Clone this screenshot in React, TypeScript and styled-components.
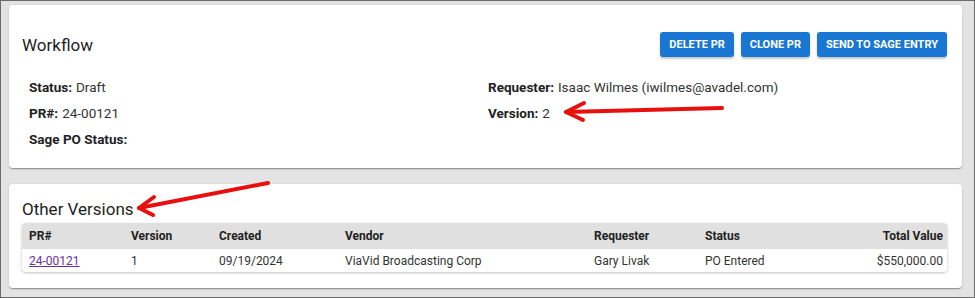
import * as React from 'react';
import styled, { createGlobalStyle } from 'styled-components';

const GlobalStyle = createGlobalStyle`
    html, body {
        margin: 0;
        padding: 0;
        background: #ffffff;
    }
    * {
        box-sizing: border-box;
    }
`;

const Frame = styled.div`
    position: relative;
    width: 975px;
    height: 298px;
    border: 1px solid #6b6b6b;
    background-color: #e3e3e3;
    padding: 4px 12px 0 8px;
    display: flex;
    flex-direction: column;
    gap: 16px;
    font-family: Roboto, 'Liberation Sans', Arial, sans-serif;
    color: #222;
    overflow: hidden;
`;

const Card = styled.div<{ $height: number }>`
    height: ${props => props.$height}px;
    background-color: #ffffff;
    border-radius: 4px;
    box-shadow: 0 2px 1px -1px rgba(0, 0, 0, 0.2), 0 1px 1px 0 rgba(0, 0, 0, 0.14),
        0 1px 3px 0 rgba(0, 0, 0, 0.12);
    padding: 0 15px 0 13px;
    display: flex;
    flex-direction: column;
`;

const Header = styled.div`
    display: flex;
    align-items: center;
    justify-content: space-between;
    height: 25px;
    margin-top: 27px;
`;

const Title = styled.h2`
    margin: 0;
    font-size: 17px;
    font-weight: 400;
    color: #1e1e1e;
    line-height: 20px;
`;

const Actions = styled.div`
    display: flex;
    gap: 7px;
`;

const Button = styled.button`
    height: 25px;
    padding: 0 9px;
    border: none;
    border-radius: 3px;
    background-color: #1976d2;
    color: #ffffff;
    font-family: Roboto, 'Liberation Sans', Arial, sans-serif;
    font-size: 11px;
    font-weight: 700;
    letter-spacing: 0;
    text-transform: uppercase;
    box-shadow: 0 2px 2px rgba(0, 0, 0, 0.22);
`;

const Fields = styled.div`
    display: grid;
    grid-template-columns: 459px 1fr;
    grid-auto-rows: 26px;
    padding: 17px 0 0 7px;
`;

const Field = styled.div`
    display: flex;
    align-items: center;
    font-size: 13.5px;
    color: #333;
`;

const Label = styled.span`
    font-weight: 700;
    color: #222;
    margin-right: 4px;
`;

const OtherTitle = styled(Title)`
    margin-top: 15px;
    margin-bottom: 4px;
`;

const Table = styled.table`
    width: 100%;
    border-collapse: collapse;
    border-radius: 4px;
    overflow: hidden;
    box-shadow: 0 1px 3px rgba(0, 0, 0, 0.25);
    font-size: 12px;
`;

const Th = styled.th<{ $align?: string }>`
    background-color: #e0e0e0;
    height: 26px;
    padding: 0 4px 0 7px;
    text-align: ${props => props.$align || 'left'};
    font-weight: 700;
    color: #222;
`;

const Td = styled.td<{ $align?: string }>`
    height: 23px;
    padding: 0 4px 0 7px;
    text-align: ${props => props.$align || 'left'};
    color: #333;
`;

const PrLink = styled.a`
    color: #6b2f9e;
    text-decoration: underline;
`;

const Overlay = styled.svg`
    position: absolute;
    left: -1px;
    top: -1px;
    pointer-events: none;
`;

const columns = [
    { title: 'PR#', width: 102 },
    { title: 'Version', width: 88 },
    { title: 'Created', width: 126 },
    { title: 'Vendor', width: 249 },
    { title: 'Requester', width: 111 },
    { title: 'Status', width: 120 },
    { title: 'Total Value', width: undefined, align: 'right' },
];

function Arrow({ tail, tip, up, down }: { tail: number[]; tip: number[]; up: number[]; down: number[] }) {
    return (
        <g stroke="#e8100e" strokeWidth={4} strokeLinecap="round" strokeLinejoin="round" fill="none">
            <line x1={tail[0]} y1={tail[1]} x2={tip[0]} y2={tip[1]} />
            <polyline points={`${up[0]},${up[1]} ${tip[0]},${tip[1]} ${down[0]},${down[1]}`} />
        </g>
    );
}

export default function App() {
    return (
        <>
            <GlobalStyle />
            <Frame>
                <Card $height={163}>
                    <Header>
                        <Title>Workflow</Title>
                        <Actions>
                            <Button>Delete PR</Button>
                            <Button>Clone PR</Button>
                            <Button>Send to Sage Entry</Button>
                        </Actions>
                    </Header>
                    <Fields>
                        <Field>
                            <Label>Status:</Label>Draft
                        </Field>
                        <Field>
                            <Label>Requester:</Label>Isaac Wilmes (iwilmes@avadel.com)
                        </Field>
                        <Field>
                            <Label>PR#:</Label>24-00121
                        </Field>
                        <Field>
                            <Label>Version:</Label>2
                        </Field>
                        <Field>
                            <Label>Sage PO Status:</Label>
                        </Field>
                    </Fields>
                </Card>

                <Card $height={104}>
                    <OtherTitle>Other Versions</OtherTitle>
                    <Table>
                        <colgroup>
                            {columns.map(c => (
                                <col key={c.title} style={c.width ? { width: c.width } : undefined} />
                            ))}
                        </colgroup>
                        <thead>
                            <tr>
                                {columns.map(c => (
                                    <Th key={c.title} $align={c.align}>
                                        {c.title}
                                    </Th>
                                ))}
                            </tr>
                        </thead>
                        <tbody>
                            <tr>
                                <Td>
                                    <PrLink href="#">24-00121</PrLink>
                                </Td>
                                <Td>1</Td>
                                <Td>09/19/2024</Td>
                                <Td>ViaVid Broadcasting Corp</Td>
                                <Td>Gary Livak</Td>
                                <Td>PO Entered</Td>
                                <Td $align="right">$550,000.00</Td>
                            </tr>
                        </tbody>
                    </Table>
                </Card>

                <Overlay width={975} height={298} viewBox="0 0 975 298">
                    <Arrow tail={[722, 108]} tip={[566, 112]} up={[584, 103]} down={[583, 120]} />
                    <Arrow tail={[268, 183]} tip={[139, 208]} up={[154, 197]} down={[153, 215]} />
                </Overlay>
            </Frame>
        </>
    );
}
